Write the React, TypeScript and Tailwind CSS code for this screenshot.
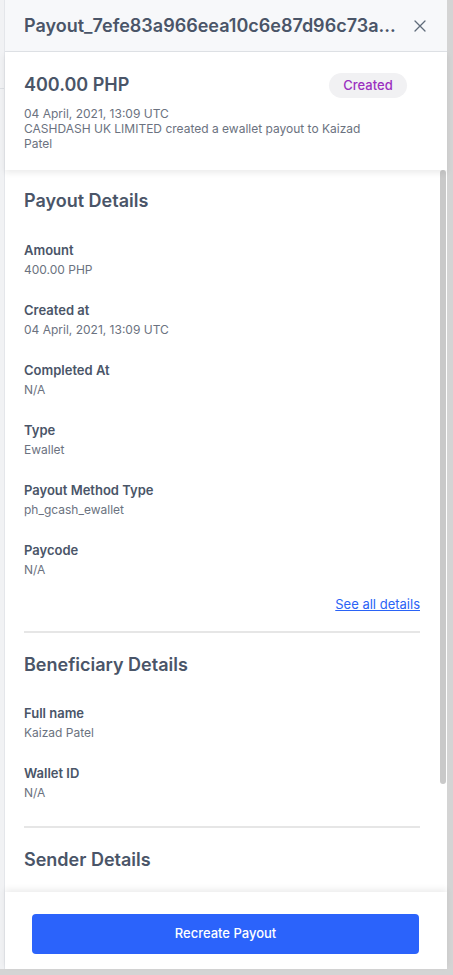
import React from 'react';

const font = { fontFamily: 'Inter, "Noto Sans", sans-serif' };

function Field({ label, value }: { label: string; value: string }) {
    return (
        <div className="flex flex-col">
            <span className="text-[13px] leading-[20px] font-semibold text-[#4a5568]">{label}</span>
            <span className="text-[12px] leading-[20px] text-[#6b7280]">{value}</span>
        </div>
    );
}

export default function App() {
    return (
        <div className="w-[453px] h-[975px] flex flex-col bg-[#d4d4d4] overflow-hidden" style={font}>
            <div className="flex h-[969px]">
                {/* page behind the drawer */}
                <div className="w-[4px] bg-[#f1f2f4] flex flex-col">
                    <div className="h-[88px]"></div>
                    <div className="h-px bg-[#dcdfe3]"></div>
                </div>

                {/* drawer */}
                <div className="w-[443px] flex flex-col bg-white border-l border-[#e4e6ea]">
                    {/* Header */}
                    <div className="h-[52px] shrink-0 flex items-center justify-between pl-[19px] pr-[20px] bg-[#f7f8fa] border-b border-[#dfe2e6]">
                        <h1 className="text-[18px] font-semibold text-[#4a5568] truncate">
                            Payout_7efe83a966eea10c6e87d96c73a...
                        </h1>
                        <button className="text-[#5f6b7a] ml-3 shrink-0">
                            <svg width="14" height="14" viewBox="0 0 14 14" fill="none" stroke="currentColor" strokeWidth="1.3" strokeLinecap="round">
                                <path d="M2 2L12 12M12 2L2 12" />
                            </svg>
                        </button>
                    </div>

                    {/* Summary */}
                    <div className="shrink-0 h-[118px] pl-[19px] pr-[40px] pt-[19px] bg-white shadow-[0_3px_6px_rgba(0,0,0,0.08)] relative z-10">
                        <div className="flex items-center justify-between">
                            <span className="text-[18px] leading-[24px] font-semibold text-[#4a5568]">400.00 PHP</span>
                            <span className="h-[25px] w-[78px] mt-[2px] flex items-center justify-center rounded-full bg-[#f1f1f3] text-[13px] font-medium text-[#9b30c0]">
                                Created
                            </span>
                        </div>
                        <p className="mt-[8px] text-[12px] leading-[15px] text-[#6b7280]">
                            04 April, 2021, 13:09 UTC
                            <br />
                            CASHDASH UK LIMITED created a ewallet payout to Kaizad
                            <br />
                            Patel
                        </p>
                    </div>

                    {/* Scrolling body */}
                    <div className="flex-1 flex min-h-0 overflow-hidden">
                        <div className="flex-1 pl-[19px] pr-[20px] pt-[19px]">
                            <h2 className="text-[18px] leading-[24px] font-semibold text-[#4a5568]">Payout Details</h2>
                            <div className="mt-[27px] flex flex-col gap-[20px]">
                                <Field label="Amount" value="400.00 PHP" />
                                <Field label="Created at" value="04 April, 2021, 13:09 UTC" />
                                <Field label="Completed At" value="N/A" />
                                <Field label="Type" value="Ewallet" />
                                <Field label="Payout Method Type" value="ph_gcash_ewallet" />
                                <Field label="Paycode" value="N/A" />
                            </div>
                            <div className="mt-[14px] flex justify-end">
                                <a className="text-[13px] leading-[20px] text-[#2a63f6] underline">See all details</a>
                            </div>
                            <div className="mt-[17px] h-[2px] bg-[#e6e6e6]"></div>

                            <h2 className="mt-[20px] text-[18px] leading-[24px] font-semibold text-[#4a5568]">Beneficiary Details</h2>
                            <div className="mt-[26px] flex flex-col gap-[20px]">
                                <Field label="Full name" value="Kaizad Patel" />
                                <Field label="Wallet ID" value="N/A" />
                            </div>
                            <div className="mt-[23px] h-[2px] bg-[#e6e6e6]"></div>

                            <h2 className="mt-[20px] text-[18px] leading-[24px] font-semibold text-[#4a5568]">Sender Details</h2>
                        </div>
                        {/* scrollbar */}
                        <div className="w-[7px] shrink-0 bg-white flex flex-col">
                            <div className="h-[614px] w-[6px] rounded-[3px] bg-[#c9c9c9]"></div>
                        </div>
                    </div>

                    {/* Footer */}
                    <div className="shrink-0 h-[77px] bg-white shadow-[0_-3px_6px_rgba(0,0,0,0.07)] relative z-10 pl-[27px] pr-[28px] pt-[22px]">
                        <button className="w-full h-[40px] rounded-[4px] bg-[#2b63fb] text-white text-[13px] font-medium">
                            Recreate Payout
                        </button>
                    </div>
                </div>

                <div className="flex-1 bg-[#d4d4d4]"></div>
            </div>
        </div>
    );
}
